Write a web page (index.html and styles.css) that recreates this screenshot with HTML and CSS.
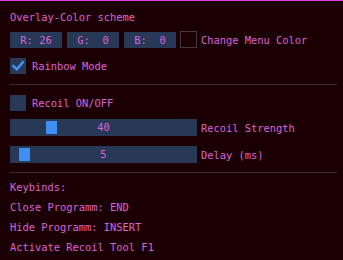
FILE: index.html
```html
<!DOCTYPE html>
<html>
	<head>
		<meta charset="UTF-8">
		<title>Overlay</title>
		<link rel="stylesheet" href="styles.css">
	</head>
	<body>
		<div id="menu">
			<div class="title">Overlay-Color scheme</div>

			<div class="row rgb">
				<div class="frame drag">R: 26</div>
				<div class="frame drag">G:  0</div>
				<div class="frame drag">B:  0</div>
				<div class="check empty"></div>
				<span class="label">Change Menu Color</span>
			</div>

			<div class="row rainbow">
				<div class="check">
					<svg width="16" height="16" viewBox="0 0 16 16">
						<path d="M3.5 8 L6.8 11.3 L12.8 4.3" fill="none" stroke="#4296fa" stroke-width="2.4" stroke-linecap="square" />
					</svg>
				</div>
				<span class="label">Rainbow Mode</span>
			</div>

			<div class="sep"></div>

			<div class="row recoil">
				<div class="check"></div>
				<span class="label">Recoil ON/OFF</span>
			</div>

			<div class="row slider-row s1">
				<div class="frame slider">
					<div class="grab" style="left: 36px"></div>
					<span class="val">40</span>
				</div>
				<span class="label">Recoil Strength</span>
			</div>

			<div class="row slider-row s2">
				<div class="frame slider">
					<div class="grab" style="left: 9px"></div>
					<span class="val">5</span>
				</div>
				<span class="label">Delay (ms)</span>
			</div>

			<div class="sep sep2"></div>

			<ul class="keys">
				<li>Keybinds:</li>
				<li>Close Programm: END</li>
				<li>Hide Programm: INSERT</li>
				<li>Activate Recoil Tool F1</li>
			</ul>
		</div>
	</body>
</html>
```
FILE: styles.css
```css
* {
	margin: 0;
	padding: 0;
}

html,
body {
	width: 343px;
	height: 260px;
	overflow: hidden;
	background: #1b0003;
}

ul,
li {
	list-style: none;
}

#menu {
	height: 259px;
	border-top: 1px solid #e03ee0;
	padding: 7px 10px 0;
	font-family: "DejaVu Sans Mono", "Liberation Mono", monospace;
	font-size: 10.4px;
	color: #dc62d6;
	white-space: nowrap;
}

.title {
	line-height: 18px;
}

.row {
	display: flex;
	align-items: center;
}

.label {
	margin-left: 4px;
	line-height: 16px;
}

.frame {
	background: #283857;
	height: 16px;
	line-height: 16px;
}

.rgb {
	margin-top: 5px;
	gap: 5px;
}

.rgb .label {
	margin-left: -1px;
}

.drag {
	width: 52px;
	text-align: center;
	white-space: pre;
}

.check {
	width: 16px;
	height: 16px;
	background: #283857;
}

.check.empty {
	width: 15px;
	height: 15px;
	margin-left: -1px;
	background: transparent;
	border: 1px solid #463840;
}

.check svg {
	display: block;
}

.rainbow {
	margin-top: 10px;
}

.rainbow .label,
.recoil .label {
	margin-left: 6px;
}

.sep {
	height: 1px;
	background: #3d2b32;
	margin: 10px -4px 0 0;
}

.recoil {
	margin-top: 10px;
}

.slider-row .label {
	margin-left: 4px;
}

.s1 {
	margin-top: 8px;
}

.s2 {
	margin-top: 10px;
}

.slider {
	position: relative;
	width: 187px;
	height: 17px;
	line-height: 17px;
	text-align: center;
}

.grab {
	position: absolute;
	top: 2px;
	width: 11px;
	height: 13px;
	background: #3f8ff2;
}

.val {
	position: relative;
}

.sep2 {
	margin-top: 9px;
}

.keys {
	margin-top: 4px;
}

.keys li {
	line-height: 20px;
}
```
